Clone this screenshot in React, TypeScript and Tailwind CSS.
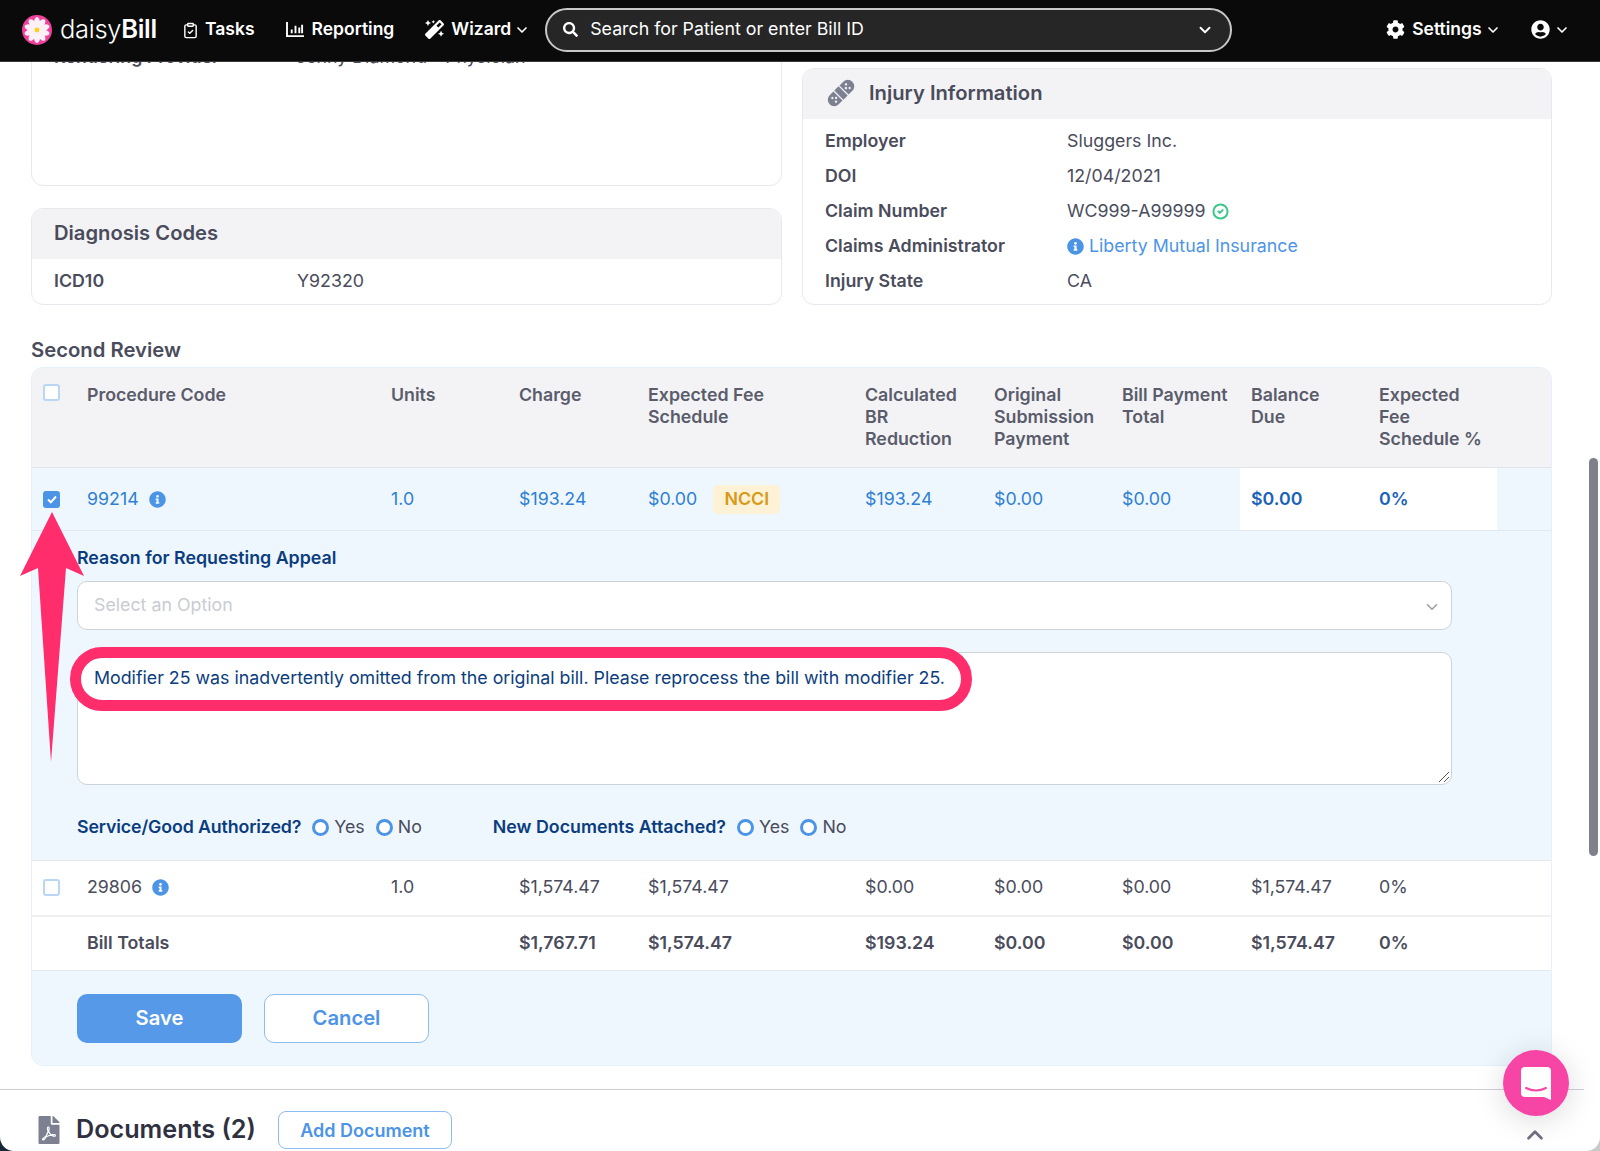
import { ChevronDown, ChevronUp, CircleCheck, ClipboardCheck } from "lucide-react";
import { FaCog, FaFilePdf, FaInfoCircle, FaMagic, FaSearch, FaUserCircle } from "react-icons/fa";

const cols = "grid grid-cols-[44px_304px_128px_129px_217px_129px_128px_129px_128px_129px_1fr]";

const Logo = () => (
  <svg viewBox="0 0 30 30" className="h-[30px] w-[30px]">
    <circle cx="15" cy="15" r="15" fill="#f0409c" />
    {[0, 36, 72, 108, 144, 180, 216, 252, 288, 324].map((a) => (
      <ellipse key={a} cx="15" cy="7.6" rx="3" ry="5.6" fill="#fdf1f7" transform={`rotate(${a} 15 15)`} />
    ))}
    <circle cx="15" cy="15" r="2.4" fill="#fbd21e" />
  </svg>
);

const BandAid = () => (
  <svg viewBox="0 0 28 28" className="ml-[1px] mr-[13px] h-[30px] w-[30px] shrink-0">
    <g transform="rotate(-45 14 14)" fill="#7d8091">
      <path d="M10 8H5a6 6 0 0 0 0 12h5z" />
      <rect x="11.2" y="8" width="5.6" height="12" />
      <path d="M18 8h5a6 6 0 0 1 0 12h-5z" />
      <g fill="#f3f3f6">
        <circle cx="5" cy="11.600" r="1.100" />
        <circle cx="5" cy="16.400" r="1.100" />
        <circle cx="7.500" cy="14" r="1.100" />
        <circle cx="23" cy="11.600" r="1.100" />
        <circle cx="23" cy="16.400" r="1.100" />
        <circle cx="20.500" cy="14" r="1.100" />
      </g>
    </g>
  </svg>
);

const NavItem = ({ icon, label, chevron }: { icon: React.ReactNode; label: string; chevron?: boolean }) => (
  <div className="flex items-center text-[17.5px] font-semibold text-white">
    {icon}
    <span>{label}</span>
    {chevron && <ChevronDown className="ml-[3px] h-4 w-4" strokeWidth={2.5} />}
  </div>
);

const Header = () => (
  <div className="absolute inset-x-0 top-0 z-20 flex h-[62px] items-center border-b border-[#3a3a3a] bg-[#0a0a0a] pb-[2px] pl-[22px]">
    <Logo />
    <div className="ml-[8px] flex w-[96px] items-baseline text-[25.5px] tracking-[-0.3px] text-white">
      <span className="font-light">daisy</span>
      <span className="font-semibold">Bill</span>
    </div>
    <div className="ml-[26px]">
      <NavItem icon={<ClipboardCheck className="mr-[6px] mt-[2px] h-[19px] w-[17px]" strokeWidth={2} />} label="Tasks" />
    </div>
    <div className="ml-[31px]">
      <NavItem
        icon={
          <svg viewBox="0 0 20 18" className="mr-[7px] h-[17px] w-[19px]" fill="none" stroke="white" strokeWidth="2">
            <path d="M1 1v15h18M6 13V9M10 13V5M14 13V7M17 13V4" />
          </svg>
        }
        label="Reporting"
      />
    </div>
    <div className="ml-[31px]">
      <NavItem icon={<FaMagic className="mr-[7px] h-[19px] w-[19px]" />} label="Wizard" chevron />
    </div>
    <div className="ml-[15px] flex h-[44px] w-[687px] items-center rounded-[22px] border-2 border-[#c8c8c8] bg-[#262626] pl-[16px] pr-[16px] text-[17.8px] text-white">
      <FaSearch className="h-[15px] w-[15px]" />
      <span className="ml-[12px] flex-1">Search for Patient or enter Bill ID</span>
      <ChevronDown className="h-[18px] w-[18px]" strokeWidth={2.5} />
    </div>
    <div className="ml-[154px]">
      <NavItem icon={<FaCog className="mr-[7px] h-[19px] w-[19px]" />} label="Settings" chevron />
    </div>
    <div className="ml-[30px] flex items-center text-white">
      <FaUserCircle className="h-[19px] w-[19px]" />
      <ChevronDown className="ml-[4px] h-4 w-4" strokeWidth={2.5} />
    </div>
  </div>
);

const CardTitle = ({ children }: { children: React.ReactNode }) => (
  <div className="flex h-[50px] items-center rounded-t-[12px] bg-[#f3f3f6] px-[22px] pb-[2px] text-[20.2px] font-semibold text-[#4a4c5c]">
    {children}
  </div>
);

const InfoRow = ({ label, children }: { label: string; children: React.ReactNode }) => (
  <div className="flex h-[35px] items-center px-[22px] text-[#4a4c5c]">
    <div className="w-[242px] font-semibold">{label}</div>
    <div className="flex items-center">{children}</div>
  </div>
);

const TopCards = () => (
  <div className="grid grid-cols-[751px_750px] gap-x-5 pl-[31px]">
    <div className="-mt-[40px] flex flex-col gap-[22px]">
      <div className="flex-1 rounded-[12px] border border-[#e8e8ee] pt-[16px]">
        <div className="flex h-[24px] items-center px-[22px] text-[#4a4c5c]">
          <div className="w-[242px] font-semibold">Rendering Provider</div>
          <div>Jenny Diamond - Physician</div>
        </div>
      </div>
      <div className="rounded-[12px] border border-[#e8e8ee]">
        <CardTitle>Diagnosis Codes</CardTitle>
        <div className="flex h-[45px] items-center px-[22px] text-[#4a4c5c]">
          <div className="w-[243px] font-semibold">ICD10</div>
          <div>Y92320</div>
        </div>
      </div>
    </div>
    <div className="rounded-[12px] border border-[#e8e8ee]">
      <CardTitle>
        <BandAid />
        Injury Information
      </CardTitle>
      <div className="pb-[5px] pt-[5px]">
        <InfoRow label="Employer">Sluggers Inc.</InfoRow>
        <InfoRow label="DOI">12/04/2021</InfoRow>
        <InfoRow label="Claim Number">
          WC999-A99999
          <CircleCheck className="ml-[6px] h-[17px] w-[17px] text-[#3cc68a]" strokeWidth={2.8} />
        </InfoRow>
        <InfoRow label="Claims Administrator">
          <FaInfoCircle className="mr-[5px] h-[17px] w-[17px] text-[#4c94e6]" />
          <span className="text-[#4c94e6]">Liberty Mutual Insurance</span>
        </InfoRow>
        <InfoRow label="Injury State">CA</InfoRow>
      </div>
    </div>
  </div>
);

const Checkbox = ({ checked }: { checked?: boolean }) =>
  checked ? (
    <div className="flex h-[17px] w-[17px] items-center justify-center rounded-[3px] bg-[#4c94e6]">
      <svg viewBox="0 0 12 12" className="h-3 w-3" fill="none" stroke="white" strokeWidth="2">
        <path d="M2 6.5l2.8 2.8L10 3.5" />
      </svg>
    </div>
  ) : (
    <div className="h-[17px] w-[17px] rounded-[3px] border-2 border-[#b9d6f5] bg-white" />
  );

const Radio = ({ label }: { label: string }) => (
  <div className="ml-[11px] flex items-center text-[#4a4c5c]">
    <div className="mr-[5px] h-[17px] w-[17px] rounded-full border-[3px] border-[#4c94e6] bg-white" />
    {label}
  </div>
);

const headers = [
  ["Units"],
  ["Charge"],
  ["Expected Fee", "Schedule"],
  ["Calculated", "BR", "Reduction"],
  ["Original", "Submission", "Payment"],
  ["Bill Payment", "Total"],
  ["Balance", "Due"],
  ["Expected", "Fee", "Schedule %"],
];

const Cell = ({ children, className }: { children?: React.ReactNode; className?: string }) => (
  <div className={`flex items-center whitespace-nowrap px-[11px] ${className ?? ""}`}>{children}</div>
);

const ReviewTable = () => (
  <div className="overflow-hidden rounded-[12px] border border-[#e4f1fd]">
    <div className={`${cols} h-[100px] border-b border-[#e3e4e8] bg-[#f3f3f6] font-semibold leading-[22px] text-[#5a5c6b]`}>
      <div className="pl-[11px] pt-[16px]">
        <Checkbox />
      </div>
      <div className="px-[11px] pt-[16px]">Procedure Code</div>
      {headers.map((lines) => (
        <div key={lines.join(" ")} className="whitespace-nowrap pl-[11px] pt-[16px]">
          {lines.map((l) => (
            <div key={l}>{l}</div>
          ))}
        </div>
      ))}
    </div>

    <div className={`${cols} h-[63px] border-b border-[#e3e9f0] bg-[#eff7fe] text-[#2f7fd4]`}>
      <div className="flex items-center pl-[11px]">
        <Checkbox checked />
      </div>
      <Cell>
        99214
        <FaInfoCircle className="ml-[10px] h-[17px] w-[17px] text-[#4c94e6]" />
      </Cell>
      <Cell>1.0</Cell>
      <Cell>$193.24</Cell>
      <Cell>
        $0.00
        <span className="ml-[16px] flex h-[29px] w-[67px] items-center justify-center rounded-[5px] bg-[#fdf1d6] font-semibold text-[#d79a16]">
          NCCI
        </span>
      </Cell>
      <Cell>$193.24</Cell>
      <Cell>$0.00</Cell>
      <Cell>$0.00</Cell>
      <Cell className="bg-white font-semibold text-[#1a62ba]">$0.00</Cell>
      <Cell className="bg-white font-semibold text-[#1a62ba]">0%</Cell>
    </div>

    <div className="relative h-[330px] border-b border-[#e6e8ec] bg-[#eff7fe] pl-[45px] pr-[99px] pt-[16px]">
      <div className="mb-[12px] h-[22px] font-semibold leading-[22px] text-[#0b3d7e]">Reason for Requesting Appeal</div>
      <div className="flex h-[49px] items-center justify-between rounded-[10px] border border-[#cfd3d9] bg-white pl-[16px] pr-[10px] text-[#c9ccd2]">
        Select an Option
        <ChevronDown className="mt-[3px] h-[18px] w-[18px] text-[#9a9ca6]" />
      </div>
      <div className="relative mt-[22px] h-[133px] rounded-[10px] border border-[#cfd3d9] bg-white pl-[16px] pt-[13px] leading-[24px] text-[#0b3d7e]">
        Modifier 25 was inadvertently omitted from the original bill. Please reprocess the bill with modifier 25.
        <svg viewBox="0 0 12 12" className="absolute bottom-[1px] right-[1px] h-3 w-3" stroke="#555" strokeWidth="1">
          <path d="M1 11L11 1M6 11l5-5" />
        </svg>
      </div>
      <div className="mt-[31px] flex h-[22px] items-center font-semibold text-[#0b3d7e]">
        <span className="tracking-[-0.13px]">Service/Good Authorized?</span>
        <div className="flex font-normal">
          <Radio label="Yes" />
          <Radio label="No" />
        </div>
        <span className="ml-[71px]">New Documents Attached?</span>
        <div className="flex font-normal">
          <Radio label="Yes" />
          <Radio label="No" />
        </div>
      </div>
    </div>

    <div className={`${cols} h-[56px] border-b-2 border-[#f0f0f2] bg-white pb-[1px] text-[#4a4c5c]`}>
      <div className="flex items-center pl-[11px]">
        <Checkbox />
      </div>
      <Cell>
        29806
        <FaInfoCircle className="ml-[10px] h-[17px] w-[17px] text-[#4c94e6]" />
      </Cell>
      <Cell>1.0</Cell>
      <Cell>$1,574.47</Cell>
      <Cell>$1,574.47</Cell>
      <Cell>$0.00</Cell>
      <Cell>$0.00</Cell>
      <Cell>$0.00</Cell>
      <Cell>$1,574.47</Cell>
      <Cell>0%</Cell>
    </div>

    <div className={`${cols} h-[54px] border-b border-[#e3e9f0] bg-white font-semibold text-[#4a4c5c]`}>
      <div />
      <Cell>Bill Totals</Cell>
      <Cell />
      <Cell>$1,767.71</Cell>
      <Cell>$1,574.47</Cell>
      <Cell>$193.24</Cell>
      <Cell>$0.00</Cell>
      <Cell>$0.00</Cell>
      <Cell>$1,574.47</Cell>
      <Cell>0%</Cell>
    </div>

    <div className="flex gap-[22px] bg-[#eff7fe] pb-[22px] pl-[45px] pt-[23px] text-[20.2px] font-semibold">
      <button className="h-[49px] w-[165px] rounded-[10px] bg-[#5699e8] text-white">Save</button>
      <button className="h-[49px] w-[165px] rounded-[10px] border border-[#8dbcf0] bg-white text-[#4c94e6]">Cancel</button>
    </div>
  </div>
);

const Annotations = () => (
  <>
    <svg viewBox="0 0 90 270" className="absolute left-0 top-[505px] z-10 h-[270px] w-[90px]">
      <path d="M52 7L84 71L66 63L51 257L38 63L20 71Z" fill="#ff2d6b" />
    </svg>
    <div className="absolute left-[70px] top-[647px] z-10 h-[64px] w-[902px] rounded-full border-[11px] border-[#ff2d6b]" />
  </>
);

export default function App() {
  return (
    <div className="relative h-[1151px] w-[1600px] overflow-hidden bg-white font-[Inter,sans-serif] text-[17.8px]">
      <Header />
      <div className="pt-[68px]">
        <TopCards />
        <div className="mb-[6px] ml-[31px] mt-[34px] h-[22px] text-[20.3px] font-semibold leading-[22px] text-[#4a4c5c]">Second Review</div>
        <div className="ml-[31px] w-[1521px]">
          <ReviewTable />
        </div>
        <div className="mr-4 mt-[23px] flex items-center border-t border-[#cfcfd8] pl-[38px] pt-[21px]">
          <FaFilePdf className="h-[28px] w-[22px] text-[#7d8091]" />
          <div className="ml-[16px] text-[25.2px] font-semibold text-[#2f3040]">Documents (2)</div>
          <button className="ml-[22px] h-[38px] w-[174px] rounded-[8px] border border-[#8dbcf0] bg-white text-[18px] font-semibold text-[#4c94e6]">
            Add Document
          </button>
        </div>
      </div>
      <Annotations />
      <div className="absolute left-[1589px] top-[458px] h-[398px] w-[9px] rounded-full bg-[#7e808c]" />
      <div className="absolute left-[1503px] top-[1050px] z-20 flex h-[66px] w-[66px] items-center justify-center rounded-full bg-[#f745a6] shadow-[0_4px_30px_rgba(0,0,0,0.15)]">
        <svg viewBox="0 0 30 33" className="h-[33px] w-[30px]">
          <path d="M4 0h22a4 4 0 0 1 4 4v29l-7-3H4a4 4 0 0 1-4-4V4a4 4 0 0 1 4-4z" fill="white" />
          <path d="M5 21q10 5 20 0" stroke="#f745a6" strokeWidth="2" fill="none" strokeLinecap="round" />
        </svg>
      </div>
      <ChevronUp className="absolute left-[1522px] top-[1122px] h-[26px] w-[26px] text-[#6f7180]" strokeWidth={2.5} />
      <svg viewBox="0 0 14 14" className="absolute bottom-0 left-0 h-[14px] w-[14px]">
        <path d="M0 0v14h14A14 14 0 0 1 0 0z" fill="#15283a" />
      </svg>
      <svg viewBox="0 0 14 14" className="absolute bottom-0 right-0 h-[14px] w-[14px]">
        <path d="M14 0v14H0A14 14 0 0 0 14 0z" fill="#c9c9c9" />
      </svg>
    </div>
  );
}
